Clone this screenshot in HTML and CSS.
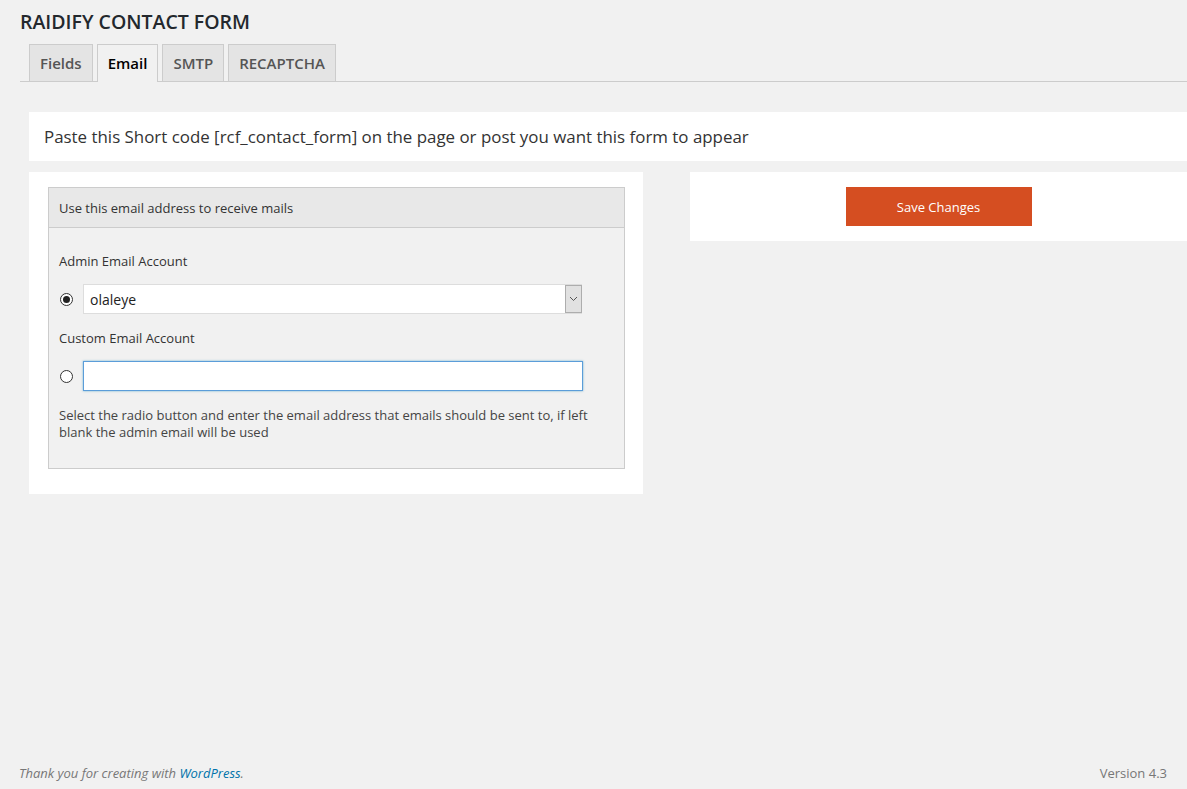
FILE: index.html
```html
<!DOCTYPE html>
<html lang="en">
<head>
<meta charset="utf-8">
<title>Raidify Contact Form</title>
<link rel="stylesheet" href="styles.css">
</head>
<body>
<div class="page">
  <main class="wrap">
    <h1 class="page-title">RAIDIFY CONTACT FORM</h1>
    <nav class="tabs">
      <a class="tab" href="#">Fields</a>
      <a class="tab tab-active" href="#">Email</a>
      <a class="tab" href="#">SMTP</a>
      <a class="tab" href="#">RECAPTCHA</a>
    </nav>

    <div class="notice">Paste this Short code [rcf_contact_form] on the page or post you want this form to appear</div>

    <div class="columns">
      <section class="panel panel-main">
        <div class="box">
          <div class="box-head">Use this email address to receive mails</div>
          <div class="box-body">
            <div class="field-label">Admin Email Account</div>
            <div class="field-row">
              <input class="radio" type="radio" name="mailto" checked>
              <div class="select-wrap">
                <select class="select">
                  <option>olaleye</option>
                </select>
                <span class="select-arrow">
                  <svg width="9" height="6" viewBox="0 0 9 6"><path d="M1 1l3.5 3.5L8 1" fill="none" stroke="#555" stroke-width="1"/></svg>
                </span>
              </div>
            </div>
            <div class="field-label">Custom Email Account</div>
            <div class="field-row">
              <input class="radio" type="radio" name="mailto">
              <input class="text-input" type="text">
            </div>
            <p class="help">Select the radio button and enter the email address that emails should be sent to, if left blank the admin email will be used</p>
          </div>
        </div>
      </section>
      <aside class="panel panel-side">
        <button class="btn-save" type="button">Save Changes</button>
      </aside>
    </div>
  </main>

  <footer class="footer">
    <span class="thanks">Thank you for creating with <a href="#">WordPress</a>.</span>
    <span class="version">Version 4.3</span>
  </footer>
</div>
</body>
</html>
```

FILE: styles.css
```css
* { box-sizing: border-box; }

html, body {
  margin: 0;
  height: 100%;
}

body {
  background: #f1f1f1;
  color: #444;
  font-family: "Open Sans", "Noto Sans", sans-serif;
  font-size: 13px;
}

.page {
  min-height: 100%;
  display: flex;
  flex-direction: column;
}

.wrap {
  flex: 1;
  padding-left: 20px;
}

.page-title {
  margin: 0;
  padding: 9px 0 0;
  font-size: 19.5px;
  line-height: 26px;
  font-weight: 600;
  color: #23282d;
}

/* tab strip */
.tabs {
  display: flex;
  gap: 4px;
  margin-top: 9px;
  padding-left: 9px;
  border-bottom: 1px solid #ccc;
}

.tab {
  display: block;
  padding: 6px 10px;
  line-height: 24px;
  font-size: 15px;
  font-weight: 600;
  color: #555;
  text-decoration: none;
  background: #e4e4e4;
  border: 1px solid #ccc;
  border-bottom: none;
}

.tab-active {
  background: #f1f1f1;
  color: #000;
  margin-bottom: -1px;
  padding-bottom: 7px;
}

/* shortcode notice */
.notice {
  margin: 30px 0 0 9px;
  background: #fff;
  height: 49px;
  padding: 0 15px;
  display: flex;
  align-items: center;
  font-size: 16.9px;
  color: #333;
}

.columns {
  display: flex;
  align-items: flex-start;
  margin: 11px 0 0 9px;
  gap: 47px;
}

.panel {
  background: #fff;
}

.panel-main {
  width: 614px;
  padding: 15px 18px 25px 19px;
}

.panel-side {
  flex: 1;
  display: flex;
  justify-content: center;
  padding: 15px 0;
}

/* email box */
.box {
  border: 1px solid #ccc;
  background: #f1f1f1;
}

.box-head {
  height: 40px;
  padding: 0 10px;
  display: flex;
  align-items: center;
  background: #e8e8e8;
  border-bottom: 1px solid #ccc;
  color: #333;
}

.box-body {
  padding: 24px 10px 27px;
}

.field-label {
  line-height: 18px;
  color: #333;
}

.field-row {
  display: flex;
  align-items: center;
  gap: 10px;
  margin: 14px 0 15px;
  padding-left: 1px;
}

.radio {
  appearance: none;
  -webkit-appearance: none;
  margin: 0;
  width: 13px;
  height: 13px;
  border: 1px solid #333;
  border-radius: 50%;
  background: #fff;
  display: grid;
  place-items: center;
  flex: none;
}

.radio:checked::before {
  content: "";
  width: 7px;
  height: 7px;
  border-radius: 50%;
  background: #222;
}

.select-wrap {
  position: relative;
  width: 499px;
  height: 30px;
}

.select {
  appearance: none;
  -webkit-appearance: none;
  width: 100%;
  height: 100%;
  margin: 0;
  padding: 0 6px;
  border: 1px solid #ddd;
  background: #fff;
  font-family: inherit;
  font-size: 14px;
  color: #222;
  border-radius: 0;
}

.select-arrow {
  position: absolute;
  top: 1px;
  right: 0;
  width: 17px;
  height: 28px;
  background: #e1e1e1;
  border: 1px solid #adadad;
  display: grid;
  place-items: center;
  pointer-events: none;
}

.text-input {
  width: 500px;
  height: 30px;
  margin: 0;
  border: 1px solid #5b9dd9;
  box-shadow: 0 0 2px rgba(30, 140, 190, 0.6);
  background: #fff;
  font-family: inherit;
  font-size: 14px;
  outline: none;
}

.help {
  margin: 16px 0 0;
  line-height: 17px;
  color: #444;
}

.field-row:last-of-type {
  margin-bottom: 0;
}

.btn-save {
  width: 186px;
  height: 39px;
  border: none;
  background: #d54e21;
  color: #fff;
  font-family: inherit;
  font-size: 13px;
  cursor: pointer;
}

/* admin footer */
.footer {
  display: flex;
  justify-content: space-between;
  padding: 0 20px 7px 19px;
  line-height: 18px;
  color: #777;
}

.thanks {
  font-style: italic;
}

.thanks a {
  color: #0073aa;
  text-decoration: none;
}
```
